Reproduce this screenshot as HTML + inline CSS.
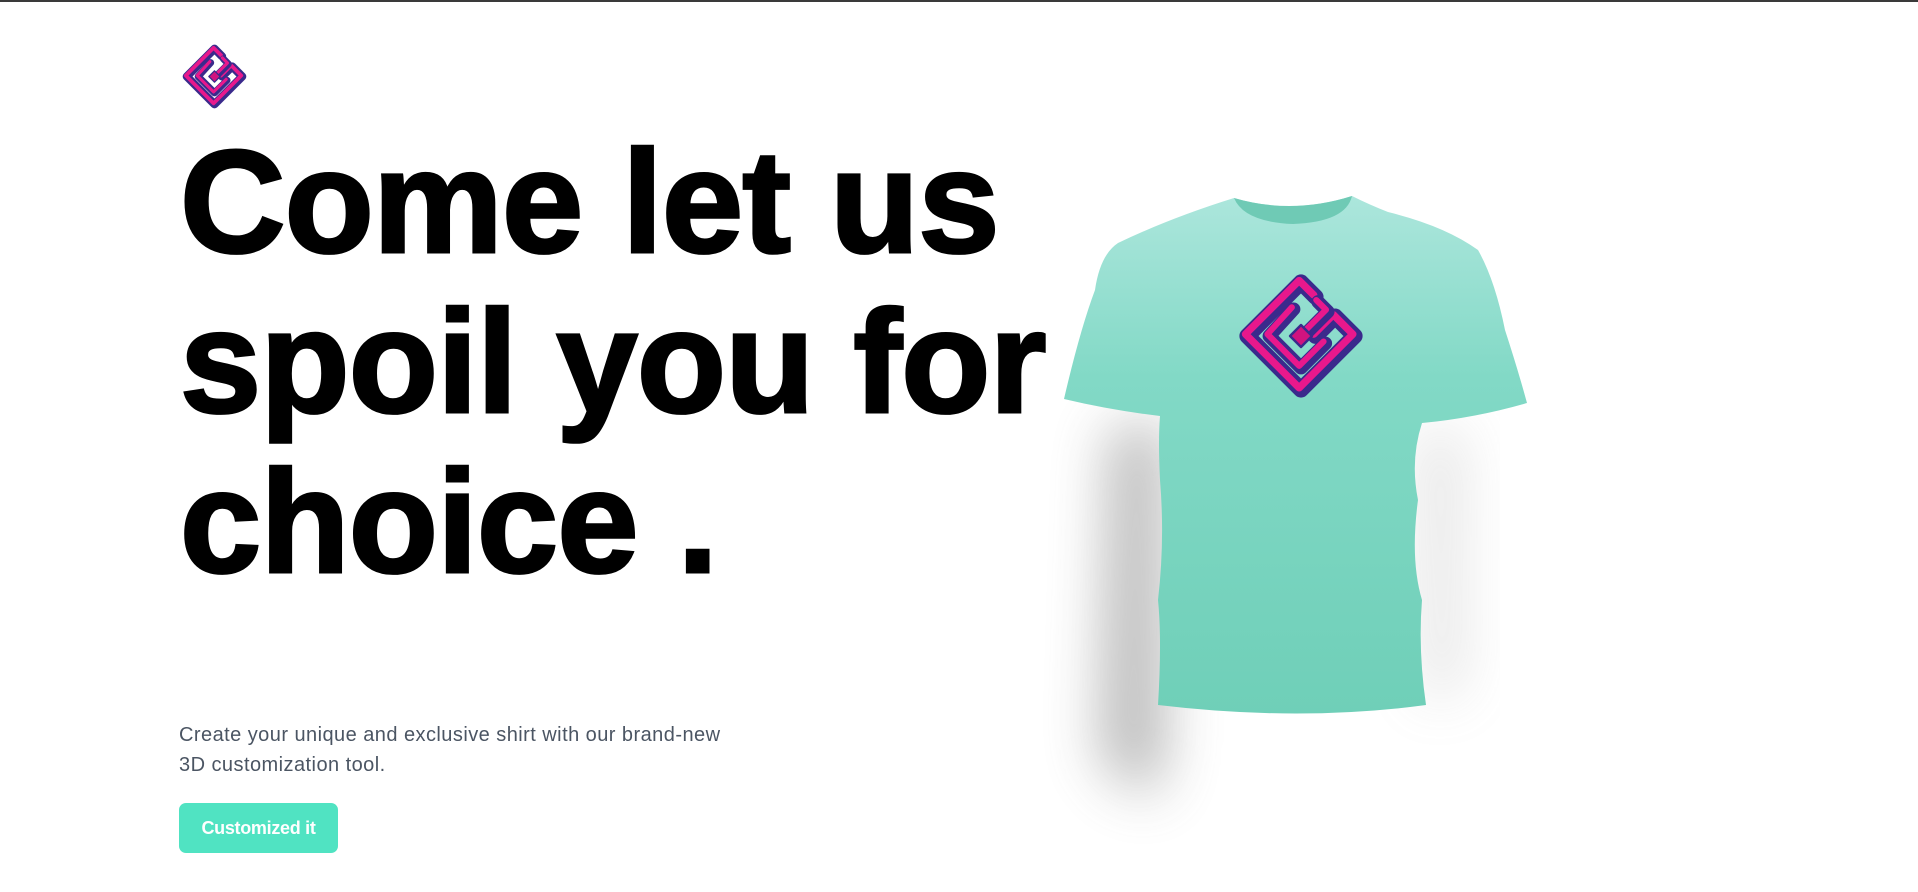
<!DOCTYPE html>
<html><head><meta charset="utf-8"><style>
html,body{margin:0;padding:0;background:#fff;width:1918px;height:892px;overflow:hidden;position:relative;font-family:"Liberation Sans",Arial,sans-serif}
.topline{position:absolute;left:0;top:0;width:1918px;height:2px;background:#3a3a3a}
h1{position:absolute;left:180px;top:122px;margin:0;font-size:146px;line-height:160px;font-weight:700;color:#000;letter-spacing:-0.8px;-webkit-text-stroke:3px #000;white-space:nowrap}
p{position:absolute;left:179px;top:720px;margin:0;font-size:20px;line-height:30px;color:#4b5563;letter-spacing:0.45px;width:700px}
.btn{position:absolute;left:179px;top:803px;width:159px;height:50px;background:#50e3c2;border-radius:7px;color:#fff;font-weight:700;font-size:18px;line-height:50px;text-align:center;letter-spacing:-0.3px}
svg{position:absolute;left:0;top:0}
</style></head><body>
<div class="topline"></div>
<svg width="1918" height="892" viewBox="0 0 1918 892">
<defs>
<linearGradient id="sh" x1="0" y1="0" x2="0" y2="1"><stop offset="0" stop-color="#ace6dc"/><stop offset="0.35" stop-color="#82d9c6"/><stop offset="1" stop-color="#6fcfb8"/></linearGradient>
<filter id="bl" x="-100%" y="-50%" width="300%" height="200%"><feGaussianBlur stdDeviation="28"/></filter>
<g id="logo" fill="none" stroke-linejoin="round" stroke-linecap="round">
<path d="M62,18 L50,6 L6,50 L50,94 L94,50 L78,34 L62,50" stroke="#3a2a8c" stroke-width="13"/>
<path d="M62,18 L50,6 L6,50 L50,94 L94,50 L78,34 L62,50" stroke="#e8188c" stroke-width="6" transform="translate(-1.5,-1.5)"/>
<path d="M64,22 L72,30 L50,52 M44,28 L24,50 L50,76 L70,56" stroke="#3a2a8c" stroke-width="11"/>
<path d="M64,22 L72,30 L50,52 M44,28 L24,50 L50,76 L70,56" stroke="#e8188c" stroke-width="5" transform="translate(-1.5,-1.5)"/>
<path d="M50,41 L59,50 L50,59 L41,50 Z" fill="#d0137f" stroke="#3a2a8c" stroke-width="2"/>
</g>
</defs>
<use href="#logo" transform="translate(183,45) scale(0.63)"/>
<path d="M1110,430 L1165,420 L1165,760 L1150,800 L1100,760 Z" fill="#666" opacity="0.45" filter="url(#bl)"/>
<path d="M1420,430 L1460,430 L1460,690 L1425,700 Z" fill="#888" opacity="0.25" filter="url(#bl)"/>
<path d="M1234,198 Q1292,215 1352,196 Q1370,205 1388,212 Q1445,226 1478,250 Q1495,280 1505,330 Q1518,370 1527,403 Q1475,418 1422,423 Q1410,460 1418,500 Q1410,560 1422,600 Q1418,650 1426,705 Q1300,722 1158,705 Q1162,640 1158,600 Q1165,540 1160,480 Q1158,440 1160,416 Q1110,410 1064,399 Q1080,330 1095,290 Q1100,255 1118,243 Q1170,218 1234,198 Z" fill="url(#sh)"/>
<path d="M1234,198 Q1292,215 1352,196 Q1346,222 1293,224 Q1244,222 1234,198 Z" fill="#6fcab5"/>
<use href="#logo" transform="translate(1240,275) scale(1.22)"/>
</svg>
<h1>Come let us<br>spoil you for<br>choice .</h1>
<p>Create your unique and exclusive shirt with our brand-new<br>3D customization tool.</p>
<div class="btn">Customized it</div>
</body></html>
